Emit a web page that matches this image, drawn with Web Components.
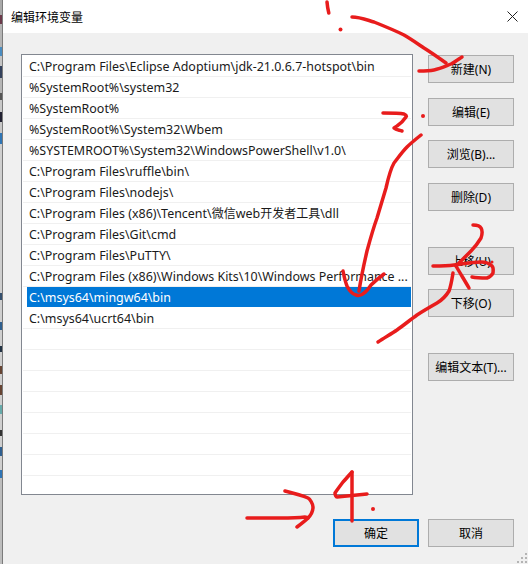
<!DOCTYPE html>
<html>
<head>
<meta charset="utf-8">
<style>
	html, body { margin: 0; height: 100%; overflow: hidden; background: #f0f0f0; }
</style>
</head>
<body>
<env-dialog>
	<path-list slot="list">
		<path-row>C:\Program Files\Eclipse Adoptium\jdk-21.0.6.7-hotspot\bin</path-row>
		<path-row>%SystemRoot%\system32</path-row>
		<path-row>%SystemRoot%</path-row>
		<path-row>%SystemRoot%\System32\Wbem</path-row>
		<path-row>%SYSTEMROOT%\System32\WindowsPowerShell\v1.0\</path-row>
		<path-row>C:\Program Files\ruffle\bin\</path-row>
		<path-row>C:\Program Files\nodejs\</path-row>
		<path-row>C:\Program Files (x86)\Tencent\<span style="font-size:12px">微信</span>web<span style="font-size:12px">开发者工具</span>\dll</path-row>
		<path-row>C:\Program Files\Git\cmd</path-row>
		<path-row>C:\Program Files\PuTTY\</path-row>
		<path-row>C:\Program Files (x86)\Windows Kits\10\Windows Performance ...</path-row>
		<path-row selected>C:\msys64\mingw64\bin</path-row>
		<path-row>C:\msys64\ucrt64\bin</path-row>
		<path-row></path-row><path-row></path-row><path-row></path-row>
		<path-row></path-row><path-row></path-row><path-row></path-row><path-row></path-row>
	</path-list>
	<win-button slot="side">新建(N)</win-button>
	<win-button slot="side" style="margin-top:15px">编辑(E)</win-button>
	<win-button slot="side" style="margin-top:14px">浏览(B)...</win-button>
	<win-button slot="side" style="margin-top:15px">删除(D)</win-button>
	<win-button slot="side" style="margin-top:36px">上移(U)</win-button>
	<win-button slot="side" style="margin-top:14px">下移(O)</win-button>
	<win-button slot="side" style="margin-top:36px">编辑文本(T)...</win-button>
	<win-button slot="foot" primary>确定</win-button>
	<win-button slot="foot">取消</win-button>
</env-dialog>
<script>
const FONT = '"Noto Sans", "Noto Sans CJK SC", sans-serif';

class EnvDialog extends HTMLElement {
	constructor() {
		super();
		this.attachShadow({mode: "open"});
		this.shadowRoot.innerHTML = `
      <style>
        :host { display: flex; position: relative; width: 528px; height: 564px; font: 12px ${FONT}; color: #000; overflow: hidden; }
        .edge { flex: none; width: 2px; border-right: 1px solid #7b7b7b; background: linear-gradient(#a9a9a9 0 15px, #6b3a4a 15px 24px, #b5b5b5 24px 47px, #4a8cc0 47px 56px, #c4c4c4 56px 66px, #33415c 66px 78px, #b5b5b5 78px 93px, #555 93px 100px, #c8c8c8 100px 112px, #223 112px 122px, #c8c8c8 122px 133px, #2f75b5 133px 144px, #cfcfcf 144px 293px, #34506f 293px 300px, #cfcfcf 300px 322px, #2f5f8f 322px 330px, #cfcfcf 330px 346px, #234 346px 352px, #cfcfcf 352px 366px, #643 366px 374px, #cfcfcf 374px 385px, #643 385px 395px, #cfcfcf 395px 405px, #6aa 405px 414px, #cfcfcf 414px 430px, #333 430px 436px, #cfcfcf 436px 447px, #2f5f8f 447px 456px, #cfcfcf 456px 470px, #2f75b5 470px 478px, #bdbdbd 478px); }
        .window { flex: 1; display: flex; flex-direction: column; min-width: 0; }
        .title { height: 33px; flex: none; background: #fff; display: flex; align-items: center; justify-content: space-between; padding: 0 10px 0 8px; font-size: 12px; }
        .title svg { display: block; }
        .body { flex: 1; background: #f0f0f0; display: flex; flex-direction: column; padding: 21px 14px 0 18px; }
        .main { display: flex; gap: 15px; height: 441px; }
        .side { display: flex; flex-direction: column; padding-top: 1px; }
        .foot { display: flex; gap: 9px; justify-content: flex-end; margin-top: 24px; }
        .ink { position: absolute; left: 0; top: 0; pointer-events: none; }
        .grip { position: absolute; right: 1px; bottom: 1px; }
      </style>
      <div class="edge"></div>
      <div class="window">
        <div class="title">
          <span>编辑环境变量</span>
          <svg width="11" height="11" viewBox="0 0 11 11"><path d="M.5.5l10 10M10.500.5l-10 10" stroke="#222" stroke-width="1" fill="none"/></svg>
        </div>
        <div class="body">
          <div class="main">
            <slot name="list"></slot>
            <div class="side"><slot name="side"></slot></div>
          </div>
          <div class="foot"><slot name="foot"></slot></div>
        </div>
      </div>
      <svg class="grip" width="10" height="10" viewBox="0 0 10 10" fill="#b4b4b4"><rect x="8" y="0" width="2" height="2"/><rect x="4" y="4" width="2" height="2"/><rect x="8" y="4" width="2" height="2"/><rect x="0" y="8" width="2" height="2"/><rect x="4" y="8" width="2" height="2"/><rect x="8" y="8" width="2" height="2"/></svg>
      <svg class="ink" width="528" height="564" viewBox="0 0 528 564" fill="none" stroke="#e81c1c" stroke-width="3.500" stroke-linecap="round" stroke-linejoin="round">
        <path d="M327 2q.5 6 1.800 11"/>
        <circle cx="340.500" cy="29.500" r="2" fill="#e81c1c" stroke="none"/>
        <path d="M352 17c8 0 15 3 22 5 10 4 20 8 30 13 7 4 14 9 20 13 8 5 15 10 22 15"/>
        <path d="M419 71c5 0 10 0 15-1 6-1 12-4 17-6 4-2 8-5 11-7"/>
        <path d="M383 113c6 0 16 0 21 1 2 1 3 2 2 3-2 3-6 7-9 9-2 1-3 2-3 2 2 2 5 2 8 3"/>
        <circle cx="423" cy="116" r="2" fill="#e81c1c" stroke="none"/>
        <path d="M421 135c-5 4-10 8-14 12-5 5-9 11-13 16-4 7-6 16-8 25-3 10-6 20-9 30-4 11-7 22-10 33-3 13-6 27-8 40"/>
        <path d="M343 271c1 5 2 10 4 15 2 4 5 8 9 9 3 1 6 0 8-2 3-2 5-5 7-8 4-4 9-8 13-11"/>
        <path d="M473 225c3 0 7 1 8 3 2 3 1 7 0 10-3 5-6 9-10 13-5 5-10 10-15 15"/>
        <path d="M433 266c7 0 14 0 21-1 9-1 18-3 27-3 4 0 9 2 11 4 2 2 1 5 1 7-1 2-3 4-6 5-5 0-10 0-15-1"/>
        <circle cx="492" cy="262" r="1.500" fill="#e81c1c" stroke="none"/>
        <path d="M456 266c4 7 9 15 13 22"/>
        <path d="M453 273c-1 6-2 13-4 18-3 5-7 9-12 12-7 4-14 8-20 12-7 5-13 10-20 15-6 4-13 8-19 12"/>
        <path d="M247 518c11 0 22 0 33 0 9 0 17 0 25-1 1 0 2 0 3 1"/>
        <path d="M285 491c8 2 16 4 23 7 2 1 5 6 5 9 0 4-2 8-5 11-3 3-7 6-11 9"/>
        <path d="M352 472c-3 3-6 7-9 10-3 4-6 8-8 11 0 2 1 4 2 4 10-1 20-2 30-3"/>
        <path d="M352 472v49"/>
        <circle cx="373" cy="509" r="2" fill="#e81c1c" stroke="none"/>
      </svg>
    `;
	}
}

class PathList extends HTMLElement {
	constructor() {
		super();
		this.attachShadow({mode: "open"});
		this.shadowRoot.innerHTML = `
      <style>
        :host { display: flex; flex-direction: column; width: 392px; height: 441px; box-sizing: border-box; border: 1px solid #828790; background: #fff; padding: 1px 1px 0 1px; overflow: hidden; }
      </style>
      <slot></slot>
    `;
	}
}

class PathRow extends HTMLElement {
	constructor() {
		super();
		this.attachShadow({mode: "open"});
		this.shadowRoot.innerHTML = `
      <style>
        :host { display: block; flex: none; height: 21px; box-sizing: border-box; border-bottom: 1px solid #f0f0f0; padding-left: 4px; font-size: 12.45px; white-space: nowrap; color: #1a1a1a; }
        .cell { height: 20px; line-height: 21px; padding-left: 2px; overflow: hidden; }
        :host([selected]) { color: #fff; border-bottom-color: #fff; }
        :host([selected]) .cell { background: #0078d7; }
      </style>
      <div class="cell"><slot></slot></div>
    `;
	}
}

class WinButton extends HTMLElement {
	constructor() {
		super();
		this.attachShadow({mode: "open"});
		this.shadowRoot.innerHTML = `
      <style>
        :host { display: flex; flex: none; align-items: center; justify-content: center; width: 86px; height: 28px; box-sizing: border-box; border: 1px solid #adadad; background: #e1e1e1; font-size: 12px; white-space: nowrap; color: #000; }
        :host([primary]) { border: 2px solid #0078d7; }
      </style>
      <slot></slot>
    `;
	}
}

customElements.define("env-dialog", EnvDialog);
customElements.define("path-list", PathList);
customElements.define("path-row", PathRow);
customElements.define("win-button", WinButton);
</script>
</body>
</html>
